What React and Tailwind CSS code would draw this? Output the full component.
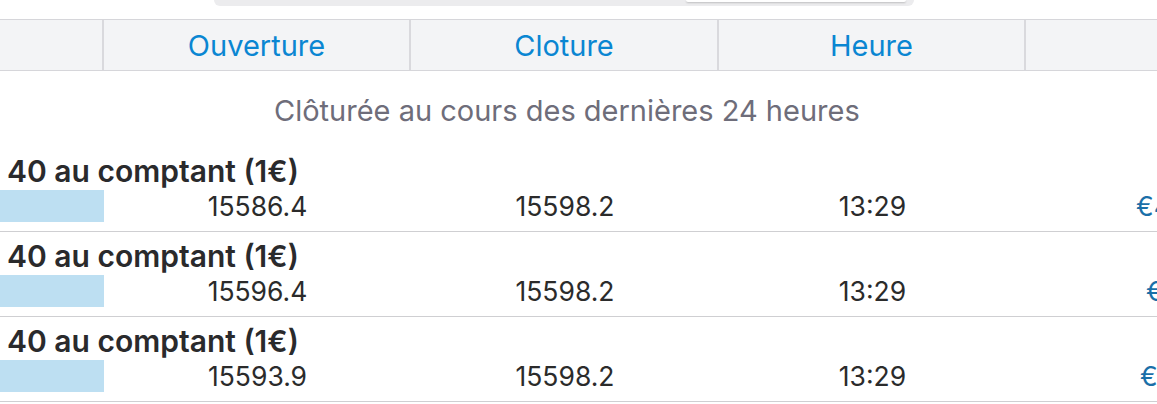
import React from "react";

const rows = [
  { open: "15586.4", close: "15598.2", time: "13:29", euro: "€4", pad: "pl-[110px]" },
  { open: "15596.4", close: "15598.2", time: "13:29", euro: "€", pad: "pl-[120px]" },
  { open: "15593.9", close: "15598.2", time: "13:29", euro: "€", pad: "pl-[114px]" },
];

export default function App() {
  return (
    <div
      className="w-[1157px] h-[404px] overflow-hidden bg-white"
      style={{ fontFamily: "Inter, 'Noto Sans', sans-serif" }}
    >
      {/* segmented control remnant */}
      <div className="h-[19px] flex items-start">
        <div className="ml-[214px] w-[700px] h-[6px] rounded-b-[12px] bg-[#ececee] flex justify-end pr-[8px]">
          <div className="w-[220px] h-[2px] rounded-b-[8px] bg-white shadow-[0_1px_2px_rgba(0,0,0,0.2)]" />
        </div>
      </div>

      {/* header */}
      <div className="grid grid-cols-[104px_307px_308px_307px_1fr] h-[52px] bg-[#f3f4f6] border-y border-[#d6d6da] text-[29px] leading-none text-[#0a86d2]">
        <div className="border-r-2 border-[#d9d9dd]" />
        <div className="border-r-2 border-[#d9d9dd] flex items-center justify-center">Ouverture</div>
        <div className="border-r-2 border-[#d9d9dd] flex items-center justify-center">Cloture</div>
        <div className="border-r-2 border-[#d9d9dd] flex items-center justify-center">Heure</div>
        <div />
      </div>

      {/* subtitle */}
      <div className="h-[76px] flex items-center pt-[2px] pl-[274px] text-[29px] leading-none text-[#6e6d7a]">
        Clôturée au cours des dernières 24 heures
      </div>

      {rows.map((r, i) => (
        <div key={i} className="h-[85px] border-b border-[#cfcfd2] flex flex-col">
          <div className="h-[43px] pl-[7px] pb-[4px] flex items-end text-[30px] font-semibold text-[#2a2a2c] leading-none">
            40 au comptant (1€)
          </div>
          <div className="grid grid-cols-[104px_307px_308px_307px_1fr] items-center text-[26.5px] leading-[32px] text-[#2b2b2b]">
            <div className="h-[32px] bg-[#bddff2]" />
            <div className="text-center">{r.open}</div>
            <div className="text-center">{r.close}</div>
            <div className="text-center">{r.time}</div>
            <div className={`${r.pad} whitespace-nowrap text-[#1a6fa8]`}>{r.euro}</div>
          </div>
        </div>
      ))}
    </div>
  );
}
